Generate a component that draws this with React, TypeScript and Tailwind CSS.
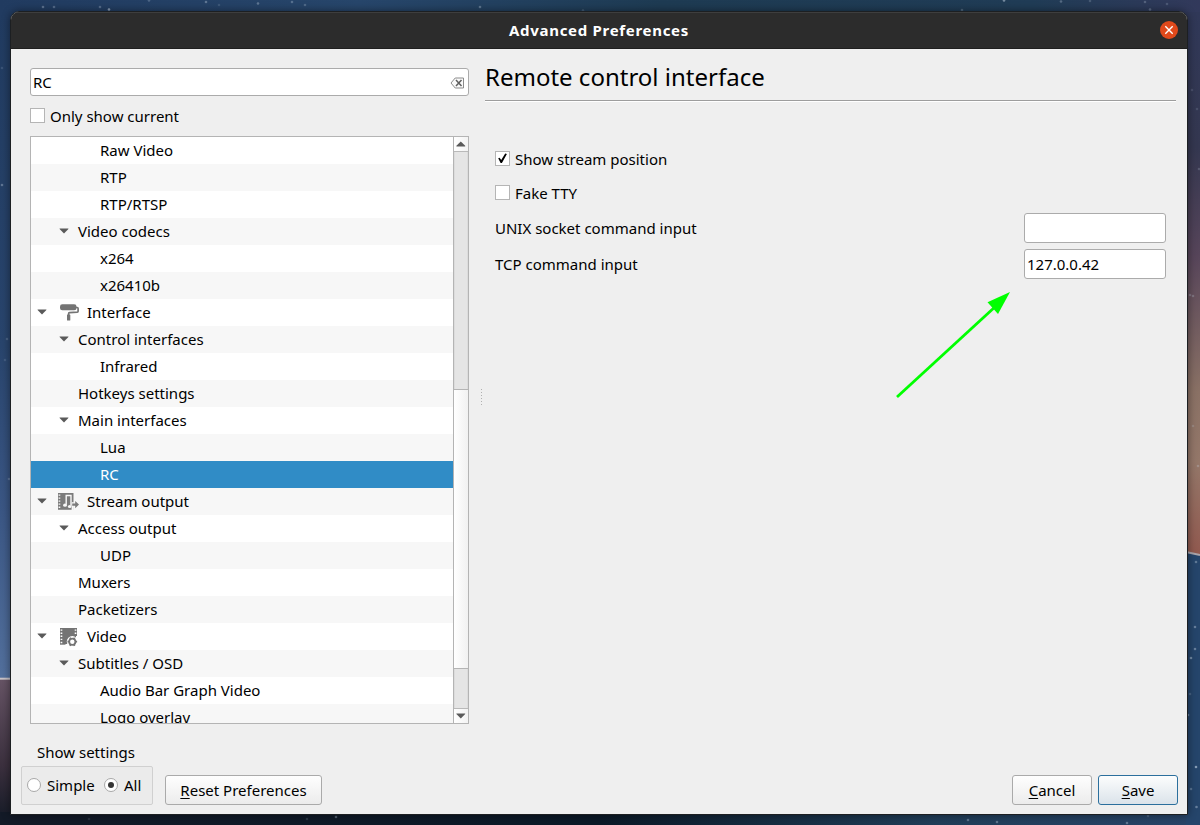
import React from "react";

type IconKind = "roller" | "stream" | "video";
type Row = { label: string; level: 0 | 1 | 2; open?: boolean; icon?: IconKind; selected?: boolean };

const rows: Row[] = [
  { label: "Raw Video", level: 2 },
  { label: "RTP", level: 2 },
  { label: "RTP/RTSP", level: 2 },
  { label: "Video codecs", level: 1, open: true },
  { label: "x264", level: 2 },
  { label: "x26410b", level: 2 },
  { label: "Interface", level: 0, open: true, icon: "roller" },
  { label: "Control interfaces", level: 1, open: true },
  { label: "Infrared", level: 2 },
  { label: "Hotkeys settings", level: 1 },
  { label: "Main interfaces", level: 1, open: true },
  { label: "Lua", level: 2 },
  { label: "RC", level: 2, selected: true },
  { label: "Stream output", level: 0, open: true, icon: "stream" },
  { label: "Access output", level: 1, open: true },
  { label: "UDP", level: 2 },
  { label: "Muxers", level: 1 },
  { label: "Packetizers", level: 1 },
  { label: "Video", level: 0, open: true, icon: "video" },
  { label: "Subtitles / OSD", level: 1, open: true },
  { label: "Audio Bar Graph Video", level: 2 },
  { label: "Logo overlay", level: 2 },
];

const stars: [number, number, number][] = [
  [43, 7, 0.35], [54, 7, 0.3], [100, 7, 0.3], [109, 9.5, 0.6], [149, 0.5, 0.25], [206, 2, 0.35], [219, 5, 0.15],
  [258, 3.5, 0.35], [292, 2, 0.3], [305, 5, 0.25], [480, 7, 0.35], [583, 10.5, 0.2], [1004, 0.5, 0.5],
  [962, 10, 0.25], [1061, 1.5, 0.3], [1090, 1, 0.2], [1145, 2, 0.25], [1150, 9.5, 0.3], [1167, 4, 0.2],
  [2, 185, 0.35], [2, 68, 0.15], [7, 339, 0.2], [9, 479, 0.25], [5, 360, 0.15], [1192, 90, 0.15], [1197, 109, 0.15],
  [1190, 295, 0.25], [1193, 296, 0.25], [1199, 169, 0.2], [1193, 426, 0.2], [1198, 466, 0.25], [1196, 562, 0.35],
  [1195, 627, 0.4], [1195, 649, 0.4], [1191, 658, 0.45], [1190, 694, 0.2], [1188, 715, 0.4], [1196, 767, 0.6],
  [1191, 789, 0.3], [1196.5, 807, 0.4], [968, 820, 0.35], [997, 822, 0.35], [1127, 823, 0.35], [1148, 816, 0.2],
  [336, 817, 0.35], [307, 819, 0.15], [89, 819, 0.12],
];

function Wallpaper() {
  return (
    <svg className="absolute inset-0" width="1200" height="825" viewBox="0 0 1200 825" aria-hidden="true">
      <defs>
        <linearGradient id="wpTop">
          <stop offset="0" stopColor="#213b60" />
          <stop offset="0.3" stopColor="#27466b" />
          <stop offset="0.55" stopColor="#1e3b53" />
          <stop offset="0.86" stopColor="#203c56" />
          <stop offset="1" stopColor="#32395b" />
        </linearGradient>
        <linearGradient id="wpLeft" x2="0" y2="1">
          <stop offset="0" stopColor="#213b60" />
          <stop offset="0.5" stopColor="#29456d" />
          <stop offset="0.75" stopColor="#3b5785" />
          <stop offset="1" stopColor="#53709d" />
        </linearGradient>
        <linearGradient id="wpLow" x2="0" y2="1">
          <stop offset="0" stopColor="#665465" />
          <stop offset="0.6" stopColor="#3b303e" />
          <stop offset="1" stopColor="#121925" />
        </linearGradient>
        <linearGradient id="wpRight" x2="0" y2="1">
          <stop offset="0" stopColor="#303858" />
          <stop offset="0.25" stopColor="#343750" />
          <stop offset="0.45" stopColor="#57455a" />
          <stop offset="0.7" stopColor="#8a7165" />
          <stop offset="0.83" stopColor="#947769" />
          <stop offset="1" stopColor="#91594f" />
        </linearGradient>
        <linearGradient id="wpBottom">
          <stop offset="0" stopColor="#131a27" />
          <stop offset="0.5" stopColor="#0b1927" />
          <stop offset="0.78" stopColor="#203d58" />
          <stop offset="1" stopColor="#284468" />
        </linearGradient>
      </defs>
      <rect width="1200" height="825" fill="url(#wpTop)" />
      <rect y="12" width="12" height="667" fill="url(#wpLeft)" />
      <rect y="679" width="12" height="146" fill="url(#wpLow)" />
      <path d="M0 678.7H12" stroke="#c9c4c9" strokeWidth="2" />
      <rect x="1186" y="12" width="14" height="542" fill="url(#wpRight)" />
      <rect y="812" width="1200" height="13" fill="url(#wpBottom)" />
      <path d="M1186 552L1200 556V825H1186Z" fill="#25456b" />
      <path d="M1186 552L1200 555" stroke="#aaa6ac" strokeWidth="2" />
      {stars.map(([x, y, o]) => (
        <circle key={`${x}-${y}`} cx={x} cy={y} r="1.3" fill="#c8d8e8" opacity={o} />
      ))}
    </svg>
  );
}

function Caret() {
  return (
    <svg width="10" height="6" viewBox="0 0 10 6" className="block">
      <path d="M0.6 0.4H9.4V1L5 5.4L0.6 1Z" fill="#5a5a5a" />
    </svg>
  );
}

function TreeIcon({ kind }: { kind: IconKind }) {
  if (kind === "roller") {
    return (
      <svg width="22" height="20" viewBox="0 0 22 20" className="block">
        <rect x="3" y="1.3" width="16.5" height="5.9" rx="2.3" fill="#747474" />
        <path d="M19 4.5H20.2Q21.1 4.5 21.1 5.4V8.2Q21.1 9 20.2 9.1L12.6 9.6Q11.6 9.7 11.6 10.8V13" fill="none" stroke="#747474" strokeWidth="1.7" />
        <rect x="10" y="11.5" width="3.3" height="6" rx="0.6" fill="#747474" />
      </svg>
    );
  }
  if (kind === "stream") {
    return (
      <svg width="22" height="20" viewBox="0 0 22 20" className="block">
        <path d="M1 1H16.5V17.8H1Z" fill="#7b7b7b" />
        <path d="M1.6 2.4h1.7v1.4H1.6zM1.6 5.4h1.7v1.4H1.6zM1.6 8.4h1.7v1.4H1.6zM1.6 11.4h1.7v1.4H1.6zM1.6 14.6h1.7v1.4H1.6z" fill="#f7f7f7" />
        <path d="M9.2 12.8V3.5H14V13.8" fill="none" stroke="#f7f7f7" strokeWidth="1.4" />
        <ellipse cx="8" cy="13.2" rx="1.9" ry="1.6" fill="#f7f7f7" />
        <ellipse cx="12.7" cy="14.6" rx="1.8" ry="1.5" fill="#f7f7f7" />
        <path d="M14.6 10.2H16.8V18H14.6Z" fill="#f7f7f7" />
        <path d="M15.2 11.4H18.2V8.9L22 12.6L18.2 16.2V13.8H15.2Z" fill="#7b7b7b" />
      </svg>
    );
  }
  return (
    <svg width="22" height="20" viewBox="0 0 22 20" className="block">
      <path d="M3 1H20V17.7H3Z" fill="#747474" />
      <path d="M3.6 2.4h1.7v1.4H3.6zM3.6 5.5h1.7v1.4H3.6zM3.6 8.6h1.7v1.4H3.6zM3.6 11.7h1.7v1.4H3.6zM3.6 14.8h1.7v1.4H3.6zM17.7 2.4h1.7v1.4h-1.7zM17.7 5.5h1.7v1.4h-1.7z" fill="#fff" />
      <circle cx="15.3" cy="14.6" r="5.5" fill="#fff" />
      <path d="M8.5 17H21V20H8.5ZM19 9H21V20H19Z" fill="#fff" />
      <circle cx="15.3" cy="14.7" r="3.1" fill="none" stroke="#747474" strokeWidth="1.8" />
      <path d="M13 10.6l.9 1.8M17.6 10.6l-.9 1.8M10.5 14.7h2M18.1 14.7h2M13 18.9l.9-1.8M17.6 18.9l-.9-1.8" stroke="#747474" strokeWidth="1.7" />
    </svg>
  );
}

function TreeRow({ row, striped }: { row: Row; striped: boolean }) {
  const bg = row.selected ? "bg-[#308cc6] text-white" : striped ? "bg-[#f7f7f7]" : "bg-white";
  const caretSlot = row.level === 0 ? "w-[22px]" : "w-[44px]";
  return (
    <div className={`flex h-[27px] shrink-0 items-center ${bg}`}>
      {row.level === 2 ? (
        <span className="w-[69px]" />
      ) : (
        <span className={`flex justify-end pr-[6px] pb-px ${caretSlot} ${row.level === 0 ? "mr-[4px]" : "mr-[3px]"}`}>
          {row.open && <Caret />}
        </span>
      )}
      {row.icon && (
        <span className="mr-[8px] pt-px">
          <TreeIcon kind={row.icon} />
        </span>
      )}
      <span className="leading-[27px]">{row.label}</span>
    </div>
  );
}

function CheckBox({ checked = false }: { checked?: boolean }) {
  return (
    <span className="flex size-[15px] shrink-0 items-center justify-center border border-[#b5b5b5] bg-white">
      {checked && (
        <svg width="11" height="11" viewBox="0 0 11 11">
          <path d="M1.2 5.2L2.6 4.7L4.2 7L8.2 0.6L9.9 0.9L4.9 10H3.6Z" fill="#000" />
        </svg>
      )}
    </span>
  );
}

function Radio({ on = false }: { on?: boolean }) {
  return (
    <span className="flex size-[14px] shrink-0 items-center justify-center rounded-full border border-[#a8a8a8] bg-white">
      {on && <span className="size-[6px] rounded-full bg-[#353535]" />}
    </span>
  );
}

function PushButton({ text, size, primary = false }: { text: string; size: string; primary?: boolean }) {
  const skin = primary
    ? "border-[#2b6f9d] bg-linear-to-b from-[#fcfdfd] to-[#dbe3ea]"
    : "border-[#aaaaaa] bg-linear-to-b from-[#fefefe] to-[#ececec]";
  return (
    <button className={`flex h-[30px] items-center justify-center rounded-[3px] border ${size} ${skin}`}>
      <span className="leading-[20px]">
        <span className="underline decoration-1 underline-offset-[2px]">{text[0]}</span>
        {text.slice(1)}
      </span>
    </button>
  );
}

function ScrollBar() {
  return (
    <div className="flex w-[15px] shrink-0 flex-col border-l border-[#b4b4b4] bg-[#e5e5e5]">
      <div className="flex h-[15px] items-center justify-center border-b border-[#b9b9b9] bg-linear-to-r from-white to-[#f3f3f3]">
        <svg width="10" height="6" viewBox="0 0 10 6">
          <path d="M0.4 5.4V4.8L4.8 0.5L9.2 4.8V5.4Z" fill="#5a5a5a" />
        </svg>
      </div>
      <div className="h-[237px] border-x border-[#dcdcdc]" />
      <div className="h-[280px] border-y border-[#b4b4b4] bg-linear-to-r from-white to-[#f1f1f1]" />
      <div className="flex-1 border-x border-[#dcdcdc]" />
      <div className="flex h-[15px] items-center justify-center border-t border-[#b9b9b9] bg-linear-to-r from-white to-[#f3f3f3] pb-px">
        <svg width="10" height="6" viewBox="0 0 10 6">
          <path d="M0.4 0.4H9.2V1L4.8 5.4L0.4 1Z" fill="#5a5a5a" />
        </svg>
      </div>
    </div>
  );
}

export default function App() {
  return (
    <div className="relative h-[825px] w-[1200px] overflow-hidden bg-[#213b60] pt-[11px] pl-[10px] font-['Noto_Sans',sans-serif] text-[15px] text-black">
      <Wallpaper />
      <div className="relative flex h-[804px] w-[1178px] flex-col overflow-hidden rounded-t-[9px] border border-[#1c1f22] bg-[#efefef] shadow-[0_0_9px_rgba(0,0,0,0.45)]">
        <header className="flex h-[37px] shrink-0 items-center border-t border-b border-t-[#3e3e3e] border-b-[#1f1f1f] bg-[#2c2c2c] pr-[9px] pb-px pl-[27px]">
          <h1 className="flex-1 text-center text-[15px] font-bold tracking-[0.7px] text-white">Advanced Preferences</h1>
          <span className="flex size-[18px] items-center justify-center rounded-full bg-[#e0491b]">
            <svg width="10" height="10" viewBox="0 0 10 10">
              <path d="M1.3 1.3L8.7 8.7M8.7 1.3L1.3 8.7" stroke="#fff" strokeWidth="1.4" />
            </svg>
          </span>
        </header>
        <main className="flex h-[675px] shrink-0">
          <section className="flex w-[458px] shrink-0 flex-col pt-[19px] pl-[19px]">
            <div className="flex h-[28px] shrink-0 items-center justify-between rounded-[3px] border border-[#ababab] bg-white pr-[3px] pl-[2px]">
              <span>RC</span>
              <svg width="15" height="12" viewBox="0 0 15 12" className="mt-px">
                <path d="M1 6L5.2 1H13.5V11H5.2Z" fill="#fafafa" stroke="#8b8b8b" strokeWidth="1" />
                <path d="M6 3L11.5 9M11.5 3L6 9" stroke="#5e5e5e" strokeWidth="1.5" />
              </svg>
            </div>
            <div className="mt-[12px] flex h-[15px] shrink-0 items-center gap-[5px]">
              <CheckBox />
              <span className="pt-[2px]">Only show current</span>
            </div>
            <div className="mt-[13px] flex h-[588px] shrink-0 overflow-hidden border border-[#b4b4b4] bg-white">
              <div className="flex flex-1 flex-col overflow-hidden">
                {rows.map((row, i) => (
                  <TreeRow key={row.label} row={row} striped={i % 2 === 1} />
                ))}
              </div>
              <ScrollBar />
            </div>
          </section>
          <div className="flex w-[16px] shrink-0 flex-col items-center justify-center gap-[2px] pt-[20px] pl-[9px]">
            {[0, 1, 2, 3, 4, 5].map((d) => (
              <i key={d} className="size-px bg-[#b0b0b0]" />
            ))}
          </div>
          <section className="w-[691px] shrink-0">
            <h2 className="h-[52px] border-b border-[#9d9d9d] pt-[11px] text-[24px] leading-[33px] shadow-[0_1px_0_#fff]">
              Remote control interface
            </h2>
            <div className="flex flex-col pt-[50px] pr-[10px] pl-[10px]">
              <div className="flex h-[15px] items-center gap-[5px]">
                <CheckBox checked />
                <span className="pt-[2px]">Show stream position</span>
              </div>
              <div className="mt-[19px] flex h-[15px] items-center gap-[5px]">
                <CheckBox />
                <span className="pt-[2px]">Fake TTY</span>
              </div>
              <div className="mt-[13px] flex h-[30px] items-center justify-between">
                <span>UNIX socket command input</span>
                <span className="h-[30px] w-[142px] rounded-[3px] border border-[#ababab] bg-white" />
              </div>
              <div className="mt-[6px] flex h-[30px] items-center justify-between">
                <span>TCP command input</span>
                <span className="h-[30px] w-[142px] rounded-[3px] border border-[#ababab] bg-white pl-[2px] leading-[29px]">
                  127.0.0.42
                </span>
              </div>
            </div>
          </section>
        </main>
        <footer className="flex flex-1 items-start pr-[9px] pl-[10px]">
          <div className="w-[132px]">
            <div className="mt-[18px] h-[24px] pl-[16px] leading-[21px]">Show settings</div>
            <div className="flex h-[39px] items-center rounded-[2px] border border-[#d0d0d0] bg-[#ebebeb] pb-px pl-[5px]">
              <Radio />
              <span className="ml-[6px] w-[57px]">Simple</span>
              <Radio on />
              <span className="ml-[6px]">All</span>
            </div>
          </div>
          <div className="mt-[51px] ml-[12px] flex flex-1">
            <PushButton text="Reset Preferences" size="w-[157px]" />
            <div className="ml-auto flex gap-[6px]">
              <PushButton text="Cancel" size="w-[80px]" />
              <PushButton text="Save" size="w-[80px]" primary />
            </div>
          </div>
        </footer>
        <svg className="absolute top-[276px] left-[881px]" width="124" height="116" viewBox="0 0 124 116">
          <path d="M5 109L104 18" stroke="#00ff00" strokeWidth="2.8" />
          <path d="M118 4L95.5 14.3L106 26Z" fill="#00ff00" />
        </svg>
      </div>
    </div>
  );
}
